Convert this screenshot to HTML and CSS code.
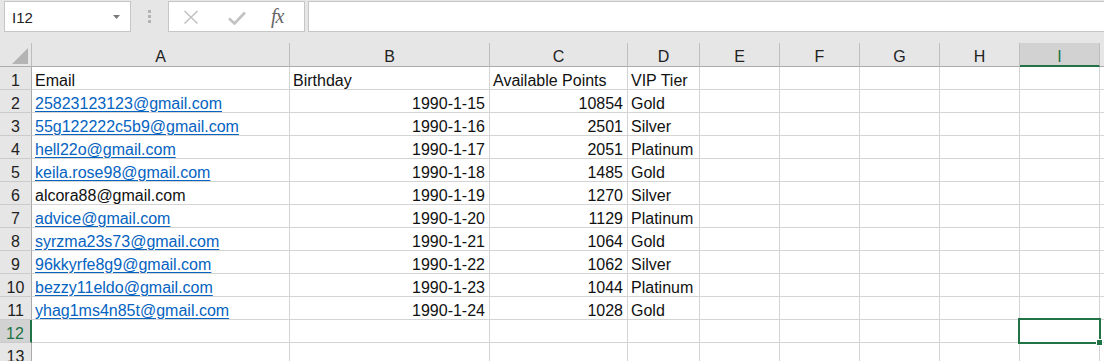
FILE: index.html
```html
<!DOCTYPE html>
<html>
<head>
<meta charset="utf-8">
<link rel="stylesheet" href="styles.css">
</head>
<body>
<div class="app">
  <div class="fbar">
    <div class="namebox">
      <span class="nb-text">I12</span>
      <svg class="nb-arrow" width="7" height="4" viewBox="0 0 7 4"><path d="M0 0H7L3.5 4Z" fill="#7a7a7a"/></svg>
    </div>
    <div class="grip"><i></i><i></i><i></i></div>
    <div class="fbtns">
      <svg class="ico" width="16" height="16" viewBox="0 0 16 16"><path d="M1.5 2L14.5 14.5M14.5 2L1.5 14.5" stroke="#c2c2c2" stroke-width="1.6" fill="none"/></svg>
      <svg class="ico" width="18" height="14" viewBox="0 0 18 14"><path d="M1 7.5L6.5 12.5L17 1.5" stroke="#c2c2c2" stroke-width="2.6" fill="none"/></svg>
      <span class="fx">fx</span>
    </div>
    <div class="finput"></div>
  </div>
  <div class="sheet">
    <div class="row hdr">
      <span class="c corner"><svg width="16" height="16" viewBox="0 0 16 16"><path d="M16 0V16H0Z" fill="#b4b4b4"/></svg></span>
      <span class="c ch">A</span><span class="c ch">B</span><span class="c ch">C</span><span class="c ch">D</span><span class="c ch">E</span><span class="c ch">F</span><span class="c ch">G</span><span class="c ch">H</span><span class="c ch sel-col">I</span><span class="c ch last"></span>
    </div>
    <div class="row">
      <span class="c rh">1</span><span class="c">Email</span><span class="c">Birthday</span><span class="c">Available Points</span><span class="c">VIP Tier</span><span class="c"></span><span class="c"></span><span class="c"></span><span class="c"></span><span class="c"></span><span class="c"></span>
    </div>
    <div class="row">
      <span class="c rh">2</span><span class="c"><a class="lnk">25823123123@gmail.com</a></span><span class="c num">1990-1-15</span><span class="c num">10854</span><span class="c">Gold</span><span class="c"></span><span class="c"></span><span class="c"></span><span class="c"></span><span class="c"></span><span class="c"></span>
    </div>
    <div class="row">
      <span class="c rh">3</span><span class="c"><a class="lnk">55g122222c5b9@gmail.com</a></span><span class="c num">1990-1-16</span><span class="c num">2501</span><span class="c">Silver</span><span class="c"></span><span class="c"></span><span class="c"></span><span class="c"></span><span class="c"></span><span class="c"></span>
    </div>
    <div class="row">
      <span class="c rh">4</span><span class="c"><a class="lnk">hell22o@gmail.com</a></span><span class="c num">1990-1-17</span><span class="c num">2051</span><span class="c">Platinum</span><span class="c"></span><span class="c"></span><span class="c"></span><span class="c"></span><span class="c"></span><span class="c"></span>
    </div>
    <div class="row">
      <span class="c rh">5</span><span class="c"><a class="lnk">keila.rose98@gmail.com</a></span><span class="c num">1990-1-18</span><span class="c num">1485</span><span class="c">Gold</span><span class="c"></span><span class="c"></span><span class="c"></span><span class="c"></span><span class="c"></span><span class="c"></span>
    </div>
    <div class="row">
      <span class="c rh">6</span><span class="c">alcora88@gmail.com</span><span class="c num">1990-1-19</span><span class="c num">1270</span><span class="c">Silver</span><span class="c"></span><span class="c"></span><span class="c"></span><span class="c"></span><span class="c"></span><span class="c"></span>
    </div>
    <div class="row">
      <span class="c rh">7</span><span class="c"><a class="lnk">advice@gmail.com</a></span><span class="c num">1990-1-20</span><span class="c num">1129</span><span class="c">Platinum</span><span class="c"></span><span class="c"></span><span class="c"></span><span class="c"></span><span class="c"></span><span class="c"></span>
    </div>
    <div class="row">
      <span class="c rh">8</span><span class="c"><a class="lnk">syrzma23s73@gmail.com</a></span><span class="c num">1990-1-21</span><span class="c num">1064</span><span class="c">Gold</span><span class="c"></span><span class="c"></span><span class="c"></span><span class="c"></span><span class="c"></span><span class="c"></span>
    </div>
    <div class="row">
      <span class="c rh">9</span><span class="c"><a class="lnk">96kkyrfe8g9@gmail.com</a></span><span class="c num">1990-1-22</span><span class="c num">1062</span><span class="c">Silver</span><span class="c"></span><span class="c"></span><span class="c"></span><span class="c"></span><span class="c"></span><span class="c"></span>
    </div>
    <div class="row">
      <span class="c rh">10</span><span class="c"><a class="lnk">bezzy11eldo@gmail.com</a></span><span class="c num">1990-1-23</span><span class="c num">1044</span><span class="c">Platinum</span><span class="c"></span><span class="c"></span><span class="c"></span><span class="c"></span><span class="c"></span><span class="c"></span>
    </div>
    <div class="row">
      <span class="c rh">11</span><span class="c"><a class="lnk">yhag1ms4n85t@gmail.com</a></span><span class="c num">1990-1-24</span><span class="c num">1028</span><span class="c">Gold</span><span class="c"></span><span class="c"></span><span class="c"></span><span class="c"></span><span class="c"></span><span class="c"></span>
    </div>
    <div class="row">
      <span class="c rh sel-row">12</span><span class="c"></span><span class="c"></span><span class="c"></span><span class="c"></span><span class="c"></span><span class="c"></span><span class="c"></span><span class="c"></span><span class="c active"><span class="selbox"><span class="handle"></span></span></span><span class="c"></span>
    </div>
    <div class="row">
      <span class="c rh">13</span><span class="c"></span><span class="c"></span><span class="c"></span><span class="c"></span><span class="c"></span><span class="c"></span><span class="c"></span><span class="c"></span><span class="c"></span><span class="c"></span>
    </div>
  </div>
</div>
</body>
</html>
```

FILE: styles.css
```css
html, body {
  margin: 0;
  padding: 0;
  background: #ffffff;
  overflow: hidden;
}
body {
  width: 1104px;
  height: 361px;
  font-family: "Liberation Sans", Arial, sans-serif;
  color: #000;
}
.app {
  width: 1104px;
  height: 361px;
  overflow: hidden;
}
.fbar {
  height: 43px;
  background: #e6e6e6;
  display: flex;
  align-items: flex-start;
  padding-top: 1px;
  box-sizing: border-box;
}
.namebox {
  margin-left: 4px;
  width: 127px;
  height: 31px;
  box-sizing: border-box;
  background: #fff;
  border: 1px solid #c6c6c6;
  display: flex;
  align-items: center;
  padding-left: 7px;
  padding-right: 7px;
}
.nb-text {
  font-size: 15px;
  color: #222;
  flex: 1;
  padding-top: 1px;
}
.nb-arrow {
  display: block;
  margin-right: 3px;
}
.grip {
  width: 37px;
  height: 31px;
  display: flex;
  flex-direction: column;
  align-items: center;
  justify-content: center;
  gap: 2px;
}
.grip i {
  display: block;
  width: 3px;
  height: 3px;
  background: #b3b3b3;
}
.fbtns {
  width: 137px;
  height: 31px;
  box-sizing: border-box;
  background: #fff;
  border: 1px solid #c6c6c6;
  display: flex;
  align-items: center;
  padding-left: 14px;
}
.fbtns .ico {
  display: block;
}
.fbtns .ico:first-child {
  margin-right: 29px;
}
.fbtns .ico:nth-child(2) {
  margin-right: 25px;
  margin-top: 3px;
}
.fx {
  font-family: "Liberation Serif", "Times New Roman", serif;
  font-style: italic;
  font-size: 20px;
  color: #666;
  letter-spacing: -1px;
  line-height: 1;
  margin-top: -2px;
}
.finput {
  margin-left: 3px;
  flex: 1;
  height: 31px;
  box-sizing: border-box;
  background: #fff;
  border: 1px solid #c6c6c6;
  border-right: none;
}
.sheet {
  display: flex;
  flex-direction: column;
}
.row {
  display: grid;
  grid-template-columns: 32px 258px 200px 138px 72px 80px 80px 80px 80px 80px 1fr;
  height: 23px;
}
.row.hdr {
  height: 24px;
}
.c {
  box-sizing: border-box;
  border-right: 1px solid #d4d4d4;
  border-bottom: 1px solid #d4d4d4;
  font-size: 16px;
  line-height: 17px;
  padding: 5px 2px 0 3px;
  white-space: nowrap;
  overflow: visible;
  position: relative;
  min-width: 0;
  color: #111;
}
.num {
  text-align: right;
  padding-right: 4px;
}
.lnk {
  color: #0563c1;
  text-decoration: underline;
  text-underline-offset: 2px;
}
.hdr .c {
  background: #e6e6e6;
  border-right: 1px solid #bdbdbd;
  border-bottom: 1px solid #ababab;
  text-align: center;
  color: #222;
  padding: 5px 0 0 0;
}
.hdr .corner {
  border-right: 1px solid #bdbdbd;
  display: flex;
  align-items: flex-end;
  justify-content: flex-end;
  padding: 0 3px 2px 0;
}
.hdr .corner svg {
  display: block;
}
.hdr .last {
  border-right: none;
}
.hdr .sel-col {
  background: #d2d2d2;
  border-bottom: 2px solid #217346;
  color: #217346;
}
.rh {
  background: #e6e6e6;
  border-right: 1px solid #ababab;
  border-bottom: 1px solid #cbcbcb;
  text-align: center;
  color: #222;
  padding: 5px 0 0 0;
}
.rh.sel-row {
  background: #d2d2d2;
  border-right: 2px solid #217346;
  color: #217346;
}
.selbox {
  position: absolute;
  left: -2px;
  top: -2px;
  right: -2px;
  bottom: -2px;
  border: 2px solid #217346;
  z-index: 2;
}
.handle {
  position: absolute;
  left: 77px;
  top: 20px;
  width: 5px;
  height: 5px;
  background: #217346;
  box-shadow: 0 0 0 1px #fff;
}
```
